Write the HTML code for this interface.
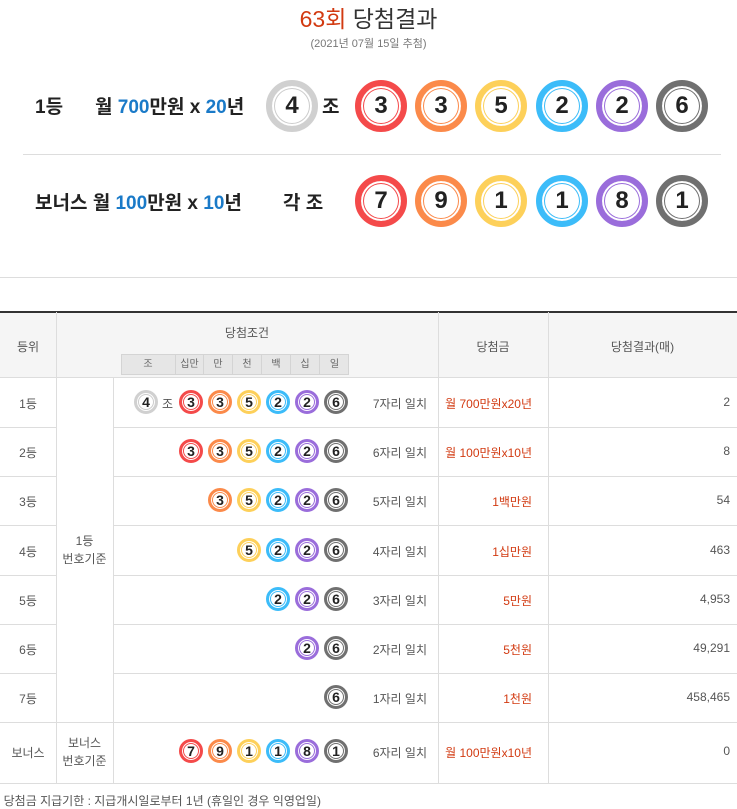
<!DOCTYPE html>
<html><head><meta charset="utf-8"><style>
*{margin:0;padding:0;box-sizing:border-box}
body{width:737px;height:809px;overflow:hidden;background:#fff;font-family:"Liberation Sans","Noto Sans CJK KR",sans-serif;color:#333;position:relative}
.a{position:absolute;white-space:nowrap}
.B{position:absolute;width:52px;height:52px;border-radius:50%;border:6px solid;background:#fff;font-weight:bold;font-size:24px;line-height:40px;text-align:center;color:#222}
.S{position:absolute;width:24px;height:24px;border-radius:50%;border:3px solid;background:#fff;font-weight:bold;font-size:14px;line-height:18px;text-align:center;color:#222}
.B{box-shadow:inset 0 0 0 2px #fff,inset 0 0 0 3px var(--c)}
.S{box-shadow:inset 0 0 0 1px #fff,inset 0 0 0 2px var(--c)}
.r{--c:#f44a4a;border-color:#f44a4a}.o{--c:#fb8a4a;border-color:#fb8a4a}.y{--c:#fdd05a;border-color:#fdd05a}
.b{--c:#3cbcf9;border-color:#3cbcf9}.p{--c:#9a6ddb;border-color:#9a6ddb}.g{--c:#707070;border-color:#707070}.w{--c:#ccc;border-color:#d0d0d0}
.big{font-size:19px;font-weight:bold;color:#222}
.bl{color:#1a7ac8}
.hl{position:absolute;height:1px;background:#ddd}
.vl{position:absolute;width:1px;background:#ddd}
.t{font-size:12px;color:#555}
.m{font-size:12px;color:#d23a11}
</style></head><body>
<div class="a" style="left:0;width:737px;text-align:center;top:0px;font-size:23px;color:#333"><span style="color:#d23a11">63회</span> 당첨결과</div>
<div class="a" style="left:0;width:737px;text-align:center;top:35px;font-size:11px;color:#777">(2021년 07월 15일 추첨)</div>

<div class="a big" style="left:35px;top:92px">1등</div>
<div class="a big" style="left:95px;top:92px">월 <span class="bl">700</span>만원 x <span class="bl">20</span>년</div>
<div class="B w" style="left:266px;top:80px">4</div>
<div class="a big" style="left:322px;top:92px">조</div>
<div class="B r" style="left:355px;top:80px">3</div>
<div class="B o" style="left:415px;top:80px">3</div>
<div class="B y" style="left:475px;top:80px">5</div>
<div class="B b" style="left:536px;top:80px">2</div>
<div class="B p" style="left:596px;top:80px">2</div>
<div class="B g" style="left:656px;top:80px">6</div>
<div class="hl" style="left:23px;width:698px;top:154px"></div>
<div class="a big" style="left:35px;top:188px">보너스 월 <span class="bl">100</span>만원 x <span class="bl">10</span>년</div>
<div class="a big" style="left:283px;top:188px">각 조</div>
<div class="B r" style="left:355px;top:175px">7</div>
<div class="B o" style="left:415px;top:175px">9</div>
<div class="B y" style="left:475px;top:175px">1</div>
<div class="B b" style="left:536px;top:175px">1</div>
<div class="B p" style="left:596px;top:175px">8</div>
<div class="B g" style="left:656px;top:175px">1</div>
<div class="hl" style="left:0;width:737px;top:277px"></div>

<!-- table -->
<div class="a" style="left:0;top:312px;width:737px;height:65px;background:#f5f5f5"></div>
<div class="a" style="left:0;top:311px;width:737px;height:2px;background:#333"></div>
<div class="a t" style="left:0;width:56px;text-align:center;top:338px">등위</div>
<div class="a t" style="left:56px;width:382px;text-align:center;top:324px">당첨조건</div>
<div class="a t" style="left:438px;width:110px;text-align:center;top:338px">당첨금</div>
<div class="a t" style="left:548px;width:189px;text-align:center;top:338px">당첨결과(매)</div>
<div class="a" style="left:121px;top:354px;width:228px;height:21px;background:#e6e6e6;border:1px solid #d4d4d4"></div>
<div class="a" style="left:121px;top:354px;width:228px;height:21px;font-size:10px;color:#666;line-height:21px">
<span class="a" style="left:0;width:54px;text-align:center">조</span>
<span class="a" style="left:54px;width:28px;text-align:center;border-left:1px solid #d4d4d4;height:21px">십만</span>
<span class="a" style="left:82px;width:29px;text-align:center;border-left:1px solid #d4d4d4;height:21px">만</span>
<span class="a" style="left:111px;width:29px;text-align:center;border-left:1px solid #d4d4d4;height:21px">천</span>
<span class="a" style="left:140px;width:29px;text-align:center;border-left:1px solid #d4d4d4;height:21px">백</span>
<span class="a" style="left:169px;width:29px;text-align:center;border-left:1px solid #d4d4d4;height:21px">십</span>
<span class="a" style="left:198px;width:30px;text-align:center;border-left:1px solid #d4d4d4;height:21px">일</span>
</div>
<div class="vl" style="left:56px;top:312px;height:471px"></div>
<div class="vl" style="left:438px;top:312px;height:471px"></div>
<div class="vl" style="left:548px;top:312px;height:471px"></div>
<div class="vl" style="left:113px;top:377px;height:406px"></div>
<div class="hl" style="left:0;width:737px;top:377px"></div>
<div class="hl" style="left:0;width:56px;top:427px"></div><div class="hl" style="left:113px;width:624px;top:427px"></div>
<div class="hl" style="left:0;width:56px;top:476px"></div><div class="hl" style="left:113px;width:624px;top:476px"></div>
<div class="hl" style="left:0;width:56px;top:525px"></div><div class="hl" style="left:113px;width:624px;top:525px"></div>
<div class="hl" style="left:0;width:56px;top:575px"></div><div class="hl" style="left:113px;width:624px;top:575px"></div>
<div class="hl" style="left:0;width:56px;top:624px"></div><div class="hl" style="left:113px;width:624px;top:624px"></div>
<div class="hl" style="left:0;width:56px;top:673px"></div><div class="hl" style="left:113px;width:624px;top:673px"></div>
<div class="hl" style="left:0;width:737px;top:722px"></div>
<div class="hl" style="left:0;width:737px;top:783px"></div>
<div class="a t" style="left:56px;width:57px;text-align:center;top:532px;line-height:18px;white-space:normal">1등<br>번호기준</div>
<div class="a t" style="left:56px;width:57px;text-align:center;top:734px;line-height:18px;white-space:normal">보너스<br>번호기준</div>

<!-- rows -->
<div class="a t" style="left:0;width:56px;text-align:center;top:395px">1등</div>
<div class="S w" style="left:134px;top:390px">4</div><div class="a t" style="left:162px;top:395px">조</div>
<div class="S r" style="left:179px;top:390px">3</div><div class="S o" style="left:208px;top:390px">3</div><div class="S y" style="left:237px;top:390px">5</div><div class="S b" style="left:266px;top:390px">2</div><div class="S p" style="left:295px;top:390px">2</div><div class="S g" style="left:324px;top:390px">6</div>
<div class="a t" style="right:310px;top:395px">7자리 일치</div><div class="a m" style="right:205px;top:395px">월 700만원x20년</div><div class="a t" style="right:7px;top:395px">2</div>

<div class="a t" style="left:0;width:56px;text-align:center;top:444px">2등</div>
<div class="S r" style="left:179px;top:439px">3</div><div class="S o" style="left:208px;top:439px">3</div><div class="S y" style="left:237px;top:439px">5</div><div class="S b" style="left:266px;top:439px">2</div><div class="S p" style="left:295px;top:439px">2</div><div class="S g" style="left:324px;top:439px">6</div>
<div class="a t" style="right:310px;top:444px">6자리 일치</div><div class="a m" style="right:205px;top:444px">월 100만원x10년</div><div class="a t" style="right:7px;top:444px">8</div>

<div class="a t" style="left:0;width:56px;text-align:center;top:493px">3등</div>
<div class="S o" style="left:208px;top:488px">3</div><div class="S y" style="left:237px;top:488px">5</div><div class="S b" style="left:266px;top:488px">2</div><div class="S p" style="left:295px;top:488px">2</div><div class="S g" style="left:324px;top:488px">6</div>
<div class="a t" style="right:310px;top:493px">5자리 일치</div><div class="a m" style="right:205px;top:493px">1백만원</div><div class="a t" style="right:7px;top:493px">54</div>

<div class="a t" style="left:0;width:56px;text-align:center;top:543px">4등</div>
<div class="S y" style="left:237px;top:538px">5</div><div class="S b" style="left:266px;top:538px">2</div><div class="S p" style="left:295px;top:538px">2</div><div class="S g" style="left:324px;top:538px">6</div>
<div class="a t" style="right:310px;top:543px">4자리 일치</div><div class="a m" style="right:205px;top:543px">1십만원</div><div class="a t" style="right:7px;top:543px">463</div>

<div class="a t" style="left:0;width:56px;text-align:center;top:592px">5등</div>
<div class="S b" style="left:266px;top:587px">2</div><div class="S p" style="left:295px;top:587px">2</div><div class="S g" style="left:324px;top:587px">6</div>
<div class="a t" style="right:310px;top:592px">3자리 일치</div><div class="a m" style="right:205px;top:592px">5만원</div><div class="a t" style="right:7px;top:592px">4,953</div>

<div class="a t" style="left:0;width:56px;text-align:center;top:641px">6등</div>
<div class="S p" style="left:295px;top:636px">2</div><div class="S g" style="left:324px;top:636px">6</div>
<div class="a t" style="right:310px;top:641px">2자리 일치</div><div class="a m" style="right:205px;top:641px">5천원</div><div class="a t" style="right:7px;top:641px">49,291</div>

<div class="a t" style="left:0;width:56px;text-align:center;top:690px">7등</div>
<div class="S g" style="left:324px;top:685px">6</div>
<div class="a t" style="right:310px;top:690px">1자리 일치</div><div class="a m" style="right:205px;top:690px">1천원</div><div class="a t" style="right:7px;top:690px">458,465</div>

<div class="a t" style="left:0;width:56px;text-align:center;top:744px">보너스</div>
<div class="S r" style="left:179px;top:739px">7</div><div class="S o" style="left:208px;top:739px">9</div><div class="S y" style="left:237px;top:739px">1</div><div class="S b" style="left:266px;top:739px">1</div><div class="S p" style="left:295px;top:739px">8</div><div class="S g" style="left:324px;top:739px">1</div>
<div class="a t" style="right:310px;top:744px">6자리 일치</div><div class="a m" style="right:205px;top:744px">월 100만원x10년</div><div class="a t" style="right:7px;top:744px">0</div>

<div class="a t" style="left:-2px;top:792px">' 당첨금 지급기한 : 지급개시일로부터 1년 (휴일인 경우 익영업일)</div>
</body></html>
